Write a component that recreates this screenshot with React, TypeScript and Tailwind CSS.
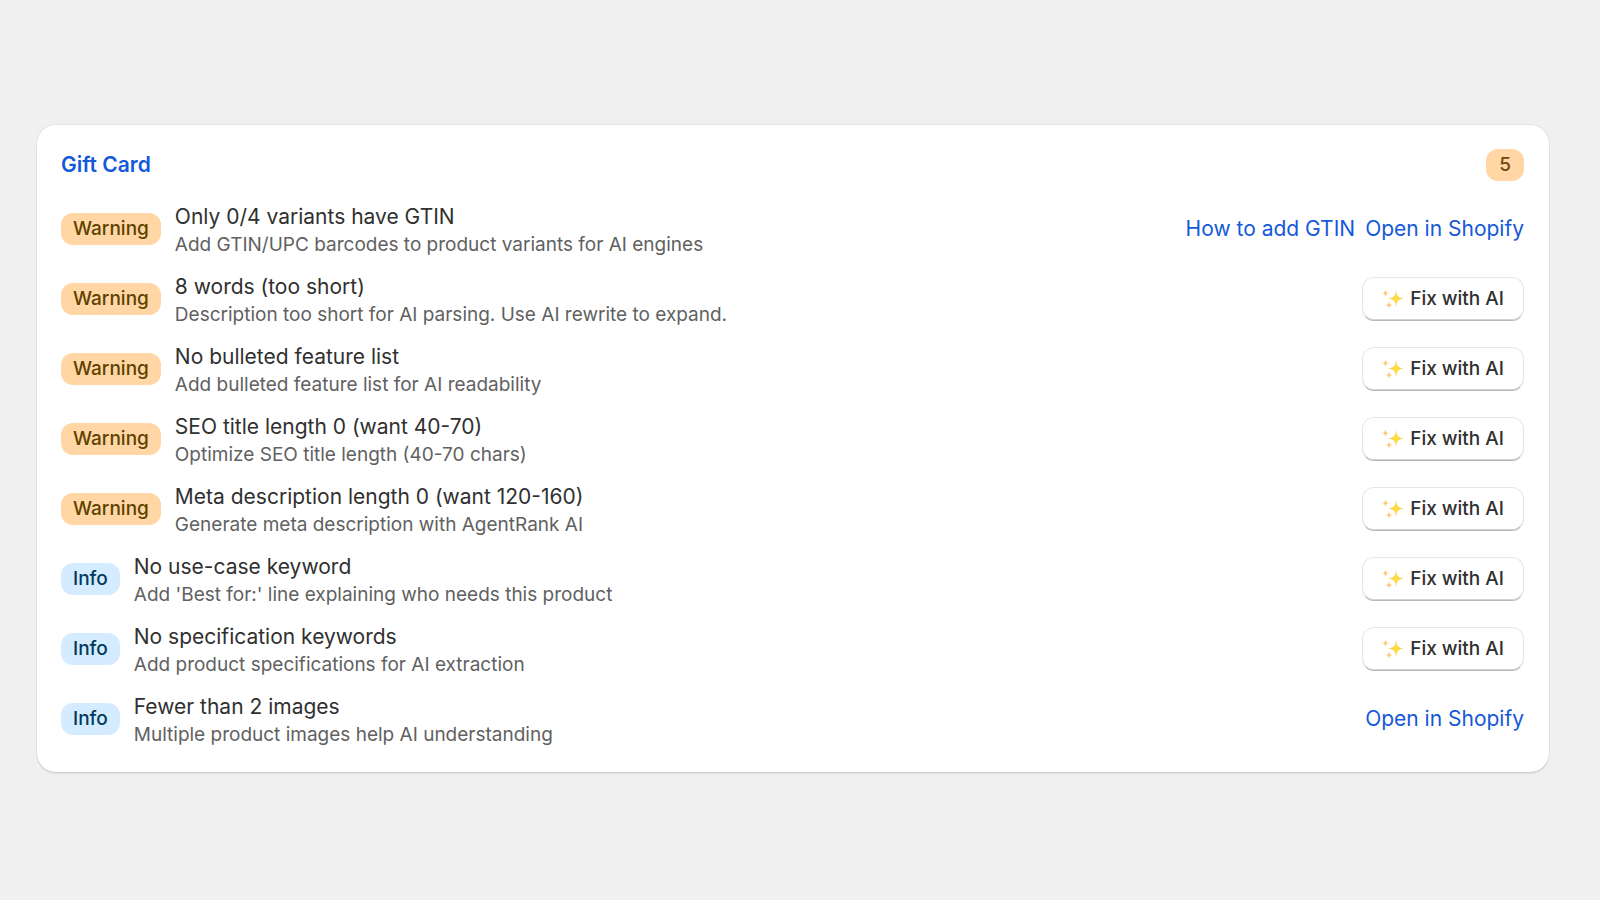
type Item = {
  tone: 'Warning' | 'Info';
  title: string;
  hint: string;
  action: 'gtin' | 'fix' | 'open';
};

const items: Item[] = [
  { tone: 'Warning', title: 'Only 0/4 variants have GTIN', hint: 'Add GTIN/UPC barcodes to product variants for AI engines', action: 'gtin' },
  { tone: 'Warning', title: '8 words (too short)', hint: 'Description too short for AI parsing. Use AI rewrite to expand.', action: 'fix' },
  { tone: 'Warning', title: 'No bulleted feature list', hint: 'Add bulleted feature list for AI readability', action: 'fix' },
  { tone: 'Warning', title: 'SEO title length 0 (want 40-70)', hint: 'Optimize SEO title length (40-70 chars)', action: 'fix' },
  { tone: 'Warning', title: 'Meta description length 0 (want 120-160)', hint: 'Generate meta description with AgentRank AI', action: 'fix' },
  { tone: 'Info', title: 'No use-case keyword', hint: "Add 'Best for:' line explaining who needs this product", action: 'fix' },
  { tone: 'Info', title: 'No specification keywords', hint: 'Add product specifications for AI extraction', action: 'fix' },
  { tone: 'Info', title: 'Fewer than 2 images', hint: 'Multiple product images help AI understanding', action: 'open' },
];

const tones = {
  Warning: 'bg-[#ffd6a4] text-[#5e4200]',
  Info: 'bg-[#d5ebff] text-[#003a5a]',
};

function Sparkles() {
  return (
    <svg className="size-[22px]" viewBox="0 0 22 22" aria-hidden="true">
      <defs>
        <radialGradient id="spark">
          <stop offset="0" stopColor="#ffe03a" />
          <stop offset="0.5" stopColor="#fdd64c" />
          <stop offset="1" stopColor="#fbc070" />
        </radialGradient>
      </defs>
      <path fill="url(#spark)" d="M14 1.500c.6 6.200 1.800 8 7.500 9-5.700 1-6.900 2.800-7.500 9-.6-6.200-1.800-8-7.500-9 5.700-1 6.900-2.800 7.500-9Z" />
      <path fill="#fccb78" d="M3.500 1.500c.5 2.300 1.200 3.100 3.400 3.600-2.200.5-2.900 1.300-3.400 3.600C3 6.400 2.300 5.600.1 5.100 2.300 4.600 3 3.800 3.500 1.500ZM7 13.400c.5 2.300 1.200 3.100 3.400 3.600-2.200.5-2.900 1.300-3.400 3.600-.5-2.300-1.200-3.100-3.400-3.600 2.200-.5 2.900-1.300 3.400-3.600Z" />
    </svg>
  );
}

function Action({ kind }: { kind: Item['action'] }) {
  if (kind === 'fix') {
    return (
      <button className="flex h-11 items-center gap-1.5 rounded-xl border border-[#e6e6e6] border-b-[#b8b8b8] bg-white px-[19px] text-[19px] font-[550] text-[#303030] shadow-[inset_0_-1px_0_0_#d4d4d4]">
        <Sparkles />
        Fix with AI
      </button>
    );
  }
  return (
    <div className="flex gap-2.5 text-[21px] text-[#1459d9]">
      {kind === 'gtin' && <a href="#gtin">How to add GTIN</a>}
      <a href="#shopify">Open in Shopify</a>
    </div>
  );
}

export default function App() {
  return (
    <main className="flex min-h-screen flex-col bg-[#f0f0f0] pt-[125px] pr-[51px] pl-[37px] font-['Inter',sans-serif]">
      <section className="rounded-[19px] bg-white pt-6 pr-[25px] pb-[18px] pl-6 shadow-[0_0_0_1px_rgba(0,0,0,0.05),0_2px_1px_rgba(0,0,0,0.08)]">
        <header className="flex items-center justify-between">
          <h2 className="text-[21px] font-semibold text-[#1459d9]"><a href="#product">Gift Card</a></h2>
          <span className="flex h-8 items-center rounded-xl bg-[#ffd6a4] px-[13px] text-[19px] font-medium text-[#6b4d0c]">5</span>
        </header>
        <ul className="mt-[13px]">
          {items.map((item) => (
            <li key={item.title} className="flex h-[70px] items-center gap-3.5">
              <span className={`flex h-8 items-center rounded-xl px-3 text-[19px] font-medium ${tones[item.tone]}`}>{item.tone}</span>
              <div className="flex-1 pt-1">
                <p className="text-[21px] leading-7 text-[#303030]">{item.title}</p>
                <p className="text-[19px] leading-7 text-[#616161]">{item.hint}</p>
              </div>
              <Action kind={item.action} />
            </li>
          ))}
        </ul>
      </section>
    </main>
  );
}
